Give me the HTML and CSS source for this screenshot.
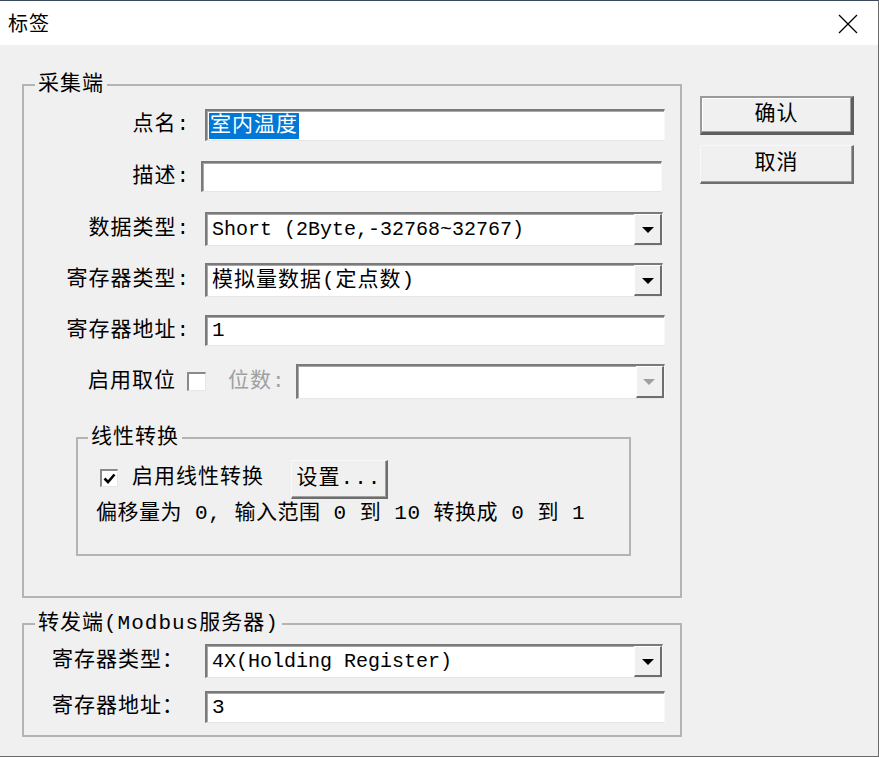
FILE: index.html
```html
<!DOCTYPE html>
<html lang="zh-CN">
<head>
<meta charset="utf-8">
<title>标签</title>
<link rel="stylesheet" href="styles.css">
</head>
<body>
<div class="window">
  <div class="titlebar">
    <span class="title">标签</span>
    <svg class="close" width="20" height="20" viewBox="0 0 20 20"><path d="M1 1 L19 19 M19 1 L1 19" stroke="#000" stroke-width="1.3" fill="none"/></svg>
  </div>
  <div class="client">
    <div class="main">
      <fieldset class="group g1">
        <legend>采集端</legend>
        <div class="form">
          <span class="lbl">点名:</span>
          <div class="edit e-name"><span class="sel">室内温度</span></div>
          <span class="lbl">描述:</span>
          <div class="edit e-desc"></div>
          <span class="lbl">数据类型:</span>
          <div class="combo"><span class="combo-text latin">Short (2Byte,-32768~32767)</span><span class="combo-btn"><i class="arrow"></i></span></div>
          <span class="lbl">寄存器类型:</span>
          <div class="combo"><span class="combo-text">模拟量数据(定点数)</span><span class="combo-btn"><i class="arrow"></i></span></div>
          <span class="lbl">寄存器地址:</span>
          <div class="edit e-addr"><span class="val">1</span></div>
          <div class="bitrow">
            <span class="nw">启用取位</span>
            <span class="check"></span>
            <span class="dim nw">位数:</span>
            <div class="combo disabled"><span class="combo-text"></span><span class="combo-btn"><i class="arrow"></i></span></div>
          </div>
        </div>
        <fieldset class="group g-linear">
          <legend>线性转换</legend>
          <div class="lin-row">
            <span class="check checked"><svg width="13" height="13" viewBox="0 0 13 13"><path d="M1.5 6.5 L5 10 L11.5 2.5" stroke="#000" stroke-width="2.6" fill="none"/></svg></span>
            <span class="lin-label nw">启用线性转换</span>
            <span class="btn btn-set">设置...</span>
          </div>
          <div class="lin-desc">偏移量为 0, 输入范围 0 到 10 转换成 0 到 1</div>
        </fieldset>
      </fieldset>
      <fieldset class="group g2">
        <legend>转发端(Modbus服务器)</legend>
        <div class="form2">
          <span class="lbl">寄存器类型：</span>
          <div class="combo"><span class="combo-text latin">4X(Holding Register)</span><span class="combo-btn"><i class="arrow"></i></span></div>
          <span class="lbl">寄存器地址：</span>
          <div class="edit e-addr2"><span class="val">3</span></div>
        </div>
      </fieldset>
    </div>
    <div class="buttons">
      <span class="btn btn-default">确认</span>
      <span class="btn">取消</span>
    </div>
  </div>
</div>
</body>
</html>
```

FILE: styles.css
```css
* { box-sizing: border-box; }
html, body { margin: 0; padding: 0; background: #ffffff; }
body {
  font-family: "Liberation Mono", "Noto Sans CJK SC", monospace;
  font-size: 21px;
  letter-spacing: 1px;
  line-height: 24px;
  color: #000;
}
.nw { white-space: nowrap; flex-shrink: 0; }
.window {
  width: 879px;
  height: 757px;
  display: flex;
  flex-direction: column;
  background: #f0f0f0;
  border-top: 1px solid #3b4b5c;
  border-right: 1px solid #6a6a6a;
  border-bottom: 1px solid #6a6a6a;
}
.titlebar {
  height: 44px;
  background: #ffffff;
  display: flex;
  align-items: center;
  justify-content: space-between;
  padding: 0 20px 0 8px;
}
.title {
  font-family: "Noto Sans CJK SC", sans-serif;
  font-size: 20px;
  letter-spacing: 1px;
}
.close { display: block; margin-top: 1px; }
.client {
  flex: 1;
  display: flex;
  align-items: flex-start;
  gap: 18px;
  padding: 28px 0 0 22px;
}
.main { width: 660px; }

.group {
  margin: 0;
  padding: 0;
  border: 2px solid #b4b4b4;
  min-width: 0;
}
.group legend {
  padding: 0 3px;
  margin-left: 11px;
  line-height: 24px;
}
.g1 { padding: 3px 15px 40px 0; }
.form {
  display: grid;
  grid-template-columns: 166px 460px;
  grid-template-rows: 50px 53px 52px 50px 51px 51px;
  column-gap: 15px;
  align-items: center;
}
.lbl { text-align: right; white-space: nowrap; }

.edit {
  height: 32px;
  background: #fff;
  border-style: solid;
  border-width: 2px 1px 1px 2px;
  border-color: #7a7a7a #f8f8f8 #e6e6e6 #7a7a7a;
  box-shadow: inset 1px 1px 0 #a8a8a8;
  display: flex;
  align-items: center;
  padding-left: 4px;
}
.e-desc { height: 31px; width: 461px; margin-left: -4px; }
.e-addr { height: 31px; }
.sel {
  background: #0078d7;
  color: #fff;
  height: 26px;
  line-height: 26px;
  padding: 0 1px 0 1px;
  margin-left: -2px;
}
.val { padding-left: 1px; }

.combo {
  height: 34px;
  width: 458px;
  display: flex;
  background: #fff;
  border-style: solid;
  border-width: 2px 1px 1px 2px;
  border-color: #7a7a7a #f8f8f8 #e6e6e6 #7a7a7a;
  box-shadow: inset 1px 1px 0 #a8a8a8;
}
.combo-text {
  flex: 1;
  display: flex;
  align-items: center;
  padding-left: 5px;
  white-space: nowrap;
}
.latin { font-size: 20px; letter-spacing: 0; }
.combo-btn {
  width: 28px;
  background: #f0f0f0;
  border-style: solid;
  border-width: 1px 2px 2px 1px;
  border-color: #ffffff #6e6e6e #6e6e6e #ffffff;
  display: flex;
  align-items: center;
  justify-content: center;
}
.arrow {
  display: block;
  width: 0;
  height: 0;
  border-left: 6px solid transparent;
  border-right: 6px solid transparent;
  border-top: 6px solid #000;
  margin-top: 1px;
}
.combo.disabled { height: 35px; width: 369px; flex-shrink: 0; }
.combo.disabled .arrow { border-top-color: #a0a0a0; }

.bitrow {
  grid-column: 1 / -1;
  display: flex;
  align-items: center;
  padding-left: 64px;
}
.check {
  width: 19px;
  height: 19px;
  flex-shrink: 0;
  background: #fff;
  border-style: solid;
  border-width: 2px 1px 1px 2px;
  border-color: #8a8a8a #e6e6e6 #e6e6e6 #8a8a8a;
  display: flex;
  align-items: center;
  justify-content: center;
}
.bitrow .check { margin-left: 11px; }
.dim { color: #a0a0a0; margin-left: 22px; margin-right: 10px; }

.g-linear {
  width: 555px;
  margin-left: 52px;
  margin-top: 19px;
  padding: 8px 0 28px 0;
}
.g-linear legend { margin-left: 10px; }
.lin-row {
  display: flex;
  align-items: center;
  height: 39px;
  padding-left: 22px;
}
.check.checked { width: 18px; height: 18px; }
.lin-label { margin-left: 14px; }
.lin-desc { margin-top: 5px; padding-left: 18px; white-space: nowrap; letter-spacing: 0.5px; }

.btn {
  display: flex;
  align-items: center;
  justify-content: center;
  background: #f0f0f0;
  border-style: solid;
  border-width: 1px 2px 2px 1px;
  border-color: #f8f8f8 #6e6e6e #6e6e6e #f8f8f8;
  box-shadow: inset -1px -1px 0 #a0a0a0;
  cursor: default;
}
.btn-set {
  width: 97px;
  height: 39px;
  margin-left: 27px;
  margin-top: 4px;
  flex-shrink: 0;
}

.g2 {
  margin-top: 14px;
  padding: 8px 15px 12px 0;
}
.form2 {
  display: grid;
  grid-template-columns: 166px 460px;
  grid-template-rows: 34px 32px;
  row-gap: 13px;
  column-gap: 15px;
  align-items: center;
}
.form2 .lbl { padding-right: 6px; }
.e-addr2 { height: 32px; }

.buttons {
  margin-top: 23px;
  width: 154px;
  display: flex;
  flex-direction: column;
  gap: 10px;
}
.buttons .btn { height: 39px; }
.btn-default {
  border-width: 2px 3px 3px 2px;
  border-color: #9a9a9a #5e5e5e #5e5e5e #9a9a9a;
  box-shadow: inset -1px -1px 0 #a0a0a0, inset 1px 1px 0 #ffffff;
}
```
